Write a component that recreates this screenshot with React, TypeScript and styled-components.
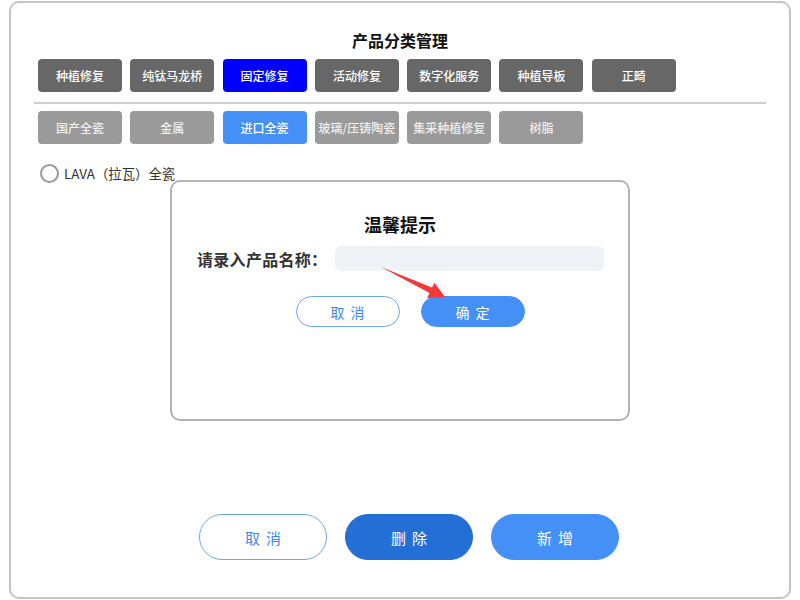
import styled, { createGlobalStyle } from "styled-components";

const GlobalStyle = createGlobalStyle`
  body {
    margin: 0;
    background: #fff;
    font-family: "Noto Sans CJK SC", "Noto Sans", sans-serif;
  }
`;

const Frame = styled.div`
  position: relative;
  box-sizing: border-box;
  width: 782px;
  height: 598px;
  margin: 1px 9px;
  border: 2px solid #c4c4c4;
  border-radius: 10px;
  display: flex;
  flex-direction: column;
  padding: 0 23px;
`;

const Title = styled.h1`
  margin: 27px 0 0;
  font-size: 16px;
  line-height: 20px;
  font-weight: 700;
  color: #111;
  text-align: center;
`;

const TabRow = styled.div<{ $top: number }>`
  display: flex;
  gap: 8.3px;
  padding-left: 4px;
  margin-top: ${({ $top }) => $top}px;
`;

const Tab = styled.button<{ $bg: string; $fg: string }>`
  width: 84px;
  height: 33px;
  border: none;
  border-radius: 4px;
  background: ${({ $bg }) => $bg};
  color: ${({ $fg }) => $fg};
  font-family: inherit;
  font-size: 12px;
  font-weight: 500;
  padding: 0;
  white-space: nowrap;
`;

const Divider = styled.hr`
  margin: 10px 0 0;
  border: none;
  height: 2px;
  background: #cfcfcf;
`;

const RadioRow = styled.label`
  display: flex;
  align-items: center;
  gap: 5px;
  margin-top: 19px;
  padding-left: 6px;
  font-size: 13.4px;
  color: #333;
`;

const RadioDot = styled.span`
  box-sizing: border-box;
  width: 19px;
  height: 19px;
  border: 2px solid #9a9a9a;
  border-radius: 50%;
`;

const BottomBar = styled.div`
  margin-top: auto;
  margin-bottom: 37px;
  display: flex;
  justify-content: center;
  gap: 18px;
  padding-left: 18px;
`;

const PillButton = styled.button<{ $variant: "outline" | "dark" | "light"; $w: number; $h: number; $size: number }>`
  box-sizing: border-box;
  width: ${({ $w }) => $w}px;
  height: ${({ $h }) => $h}px;
  border-radius: 999px;
  font-family: inherit;
  font-size: ${({ $size }) => $size}px;
  letter-spacing: 6px;
  padding: 0 0 0 6px;
  border: 1px solid
    ${({ $variant }) => ($variant === "outline" ? "#6aa6f6" : $variant === "dark" ? "#236fd6" : "#4590f7")};
  background: ${({ $variant }) => ($variant === "outline" ? "#fff" : $variant === "dark" ? "#236fd6" : "#4590f7")};
  color: ${({ $variant }) => ($variant === "outline" ? "#3f87f0" : "#fff")};
`;

const Modal = styled.div`
  position: absolute;
  left: 159px;
  top: 177px;
  box-sizing: border-box;
  width: 460px;
  height: 241px;
  border: 2px solid #b4b4b4;
  border-radius: 10px;
  background: #fff;
  display: flex;
  flex-direction: column;
  align-items: stretch;
`;

const ModalTitle = styled.h2`
  margin: 30px 0 0;
  font-size: 18px;
  line-height: 24px;
  font-weight: 700;
  color: #111;
  text-align: center;
`;

const FieldRow = styled.div`
  display: flex;
  align-items: center;
  gap: 8px;
  margin-top: 10px;
  padding: 0 24px 0 25px;
`;

const FieldLabel = styled.span`
  font-size: 16px;
  font-weight: 700;
  color: #333;
  white-space: nowrap;
  letter-spacing: 0.3px;
`;

const FieldInput = styled.input`
  flex: 1;
  height: 23px;
  border: none;
  border-radius: 6px;
  background: #eff2f7;
  outline: none;
`;

const ModalActions = styled.div`
  display: flex;
  justify-content: center;
  gap: 21px;
  margin-top: 25px;
  padding-left: 20px;
`;

const Arrow = styled.svg`
  position: absolute;
  left: 0;
  top: 0;
  pointer-events: none;
`;

const firstTabs = ["种植修复", "纯钛马龙桥", "固定修复", "活动修复", "数字化服务", "种植导板", "正畸"];
const secondTabs = ["国产全瓷", "金属", "进口全瓷", "玻璃/压铸陶瓷", "集采种植修复", "树脂"];

export default function App() {
  return (
    <>
      <GlobalStyle />
      <Frame>
        <Title>产品分类管理</Title>
        <TabRow $top={9}>
          {firstTabs.map((t, i) => (
            <Tab key={t} $bg={i === 2 ? "#0000ff" : "#676767"} $fg="#fff">
              {t}
            </Tab>
          ))}
        </TabRow>
        <Divider />
        <TabRow $top={7}>
          {secondTabs.map((t, i) => (
            <Tab key={t} $bg={i === 2 ? "#4590f7" : "#9a9a9a"} $fg={i === 2 ? "#fff" : "#f0f0f0"}>
              {t}
            </Tab>
          ))}
        </TabRow>
        <RadioRow>
          <RadioDot />
          LAVA（拉瓦）全瓷
        </RadioRow>
        <BottomBar>
          <PillButton $variant="outline" $w={128} $h={46} $size={15}>取消</PillButton>
          <PillButton $variant="dark" $w={128} $h={46} $size={15}>删除</PillButton>
          <PillButton $variant="light" $w={128} $h={46} $size={15}>新增</PillButton>
        </BottomBar>

        <Modal>
          <ModalTitle>温馨提示</ModalTitle>
          <FieldRow>
            <FieldLabel>请录入产品名称：</FieldLabel>
            <FieldInput />
          </FieldRow>
          <ModalActions>
            <PillButton $variant="outline" $w={104} $h={31} $size={14}>取消</PillButton>
            <PillButton $variant="light" $w={104} $h={31} $size={14}>确定</PillButton>
          </ModalActions>
        </Modal>

        <Arrow width="782" height="598" viewBox="9 1 782 598">
          <polygon
            points="379,265 430,285.6 432.5,280.8 443,295 425,296 427.6,291"
            fill="#f53a3a"
          />
        </Arrow>
      </Frame>
    </>
  );
}
